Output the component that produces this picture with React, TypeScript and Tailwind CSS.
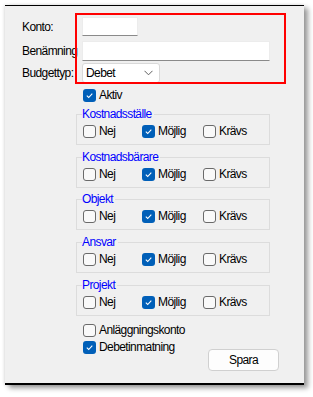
import React from "react";

function Cb({ checked }: { checked?: boolean }) {
  return checked ? (
    <span className="w-[13px] h-[13px] rounded-[3px] bg-[#005fb8] flex items-center justify-center shrink-0">
      <svg width="9" height="9" viewBox="0 0 9 9">
        <path d="M1.8 4.7 L3.7 6.5 L7.3 2.6" fill="none" stroke="white" strokeWidth="1.1" />
      </svg>
    </span>
  ) : (
    <span className="w-[13px] h-[13px] rounded-[3px] border border-[#6a6a6a] bg-[#f9f9f9] shrink-0" />
  );
}

function Check({ checked, label, w }: { checked?: boolean; label: string; w?: string }) {
  return (
    <div className={`flex items-center h-[14px] gap-[3px] ${w ?? ""}`}>
      <Cb checked={checked} />
      <span className="leading-[14px]">{label}</span>
    </div>
  );
}

function Group({ title, mt }: { title: string; mt: string }) {
  return (
    <div className={`relative ml-[71px] w-[194px] h-[31px] border border-[#dcdcdc] shrink-0 ${mt}`}>
      <span className="absolute left-[5px] top-[-8px] bg-[#f0f0f0] pr-[2px] leading-[14px] text-[#0000ff]">
        {title}
      </span>
      <div className="flex items-center pl-[6px] pt-[9px]">
        <Check label="Nej" w="w-[59px]" />
        <Check label="Möjlig" checked w="w-[61px]" />
        <Check label="Krävs" />
      </div>
    </div>
  );
}

export default function App() {
  return (
    <div className="w-[313px] h-[397px] bg-white pt-[5px] pl-[5px] font-['Liberation_Sans',Arial,sans-serif] text-[12px] tracking-[-0.6px] text-black">
      <div className="relative w-[299px] h-[380px] bg-[#f0f0f0] border-t border-black border-b-2 flex flex-col shadow-[4px_3px_5px_rgba(0,0,0,0.4),-1px_0_3px_rgba(0,0,0,0.12)]">
        <div className="flex items-center pl-[17px] mt-[11px] h-[19px]">
          <span className="w-[60px]">Konto:</span>
          <div className="w-[56px] h-[19px] bg-white border border-[#ececec] border-b-[#8a8a8a]" />
        </div>
        <div className="flex items-center pl-[17px] mt-[5px] h-[20px]">
          <span className="w-[60px]">Benämning</span>
          <div className="w-[188px] h-[20px] bg-white border border-[#ececec] border-b-[#8a8a8a]" />
        </div>
        <div className="flex items-center pl-[17px] mt-[2px] h-[20px]">
          <span className="w-[60px]">Budgettyp:</span>
          <div className="w-[78px] h-[20px] bg-white border border-[#d9d9d9] rounded-[3px] flex items-center justify-between pl-[3px] pr-[6px]">
            <span>Debet</span>
            <svg width="9" height="6" viewBox="0 0 9 6">
              <path d="M0.5 0.8 L4.5 4.8 L8.5 0.8" fill="none" stroke="#606060" strokeWidth="1" />
            </svg>
          </div>
        </div>
        <div className="pl-[78px] mt-[5px]">
          <Check label="Aktiv" checked />
        </div>
        <Group title="Kostnadsställe" mt="mt-[12px]" />
        <Group title="Kostnadsbärare" mt="mt-[12px]" />
        <Group title="Objekt" mt="mt-[11px]" />
        <Group title="Ansvar" mt="mt-[12px]" />
        <Group title="Projekt" mt="mt-[12px]" />
        <div className="flex">
          <div className="pl-[78px] pt-[7px] flex flex-col gap-[3px]">
            <Check label="Anläggningskonto" />
            <Check label="Debetinmatning" checked />
          </div>
          <button className="ml-auto mr-[25px] mt-[33px] w-[71px] h-[22px] bg-[#fdfdfd] border border-[#d0d0d0] rounded-[4px] flex items-center justify-center">
            Spara
          </button>
        </div>
        <div className="absolute left-[70px] top-[7px] w-[211px] h-[71px] border-2 border-[#ff0000]" />
      </div>
    </div>
  );
}
